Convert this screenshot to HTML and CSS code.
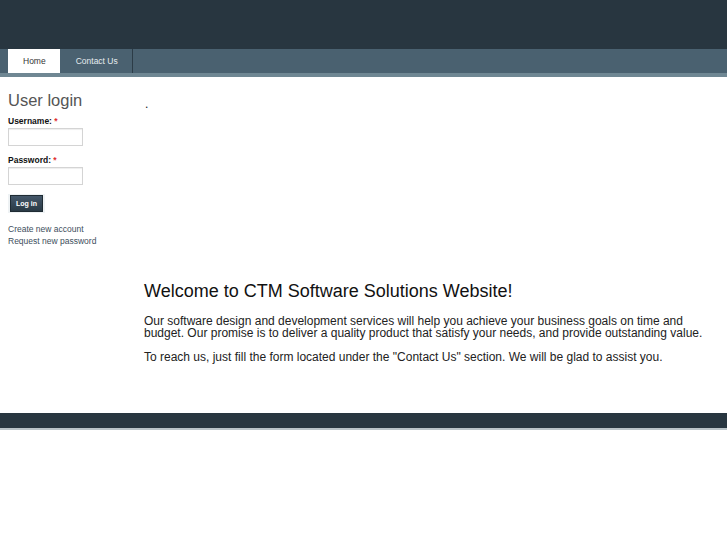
FILE: index.html
```html
<!DOCTYPE html>
<html lang="en">
<head>
  <meta charset="UTF-8">
  <title>CTM Software Solutions</title>
  <link rel="stylesheet" href="styles.css">
</head>
<body>

  <div id="header"></div>

  <div id="nav">
    <ul class="tabs">
      <li class="active"><a href="#">Home</a></li>
      <li><a href="#">Contact Us</a></li>
    </ul>
  </div>

  <div id="page">
    <div id="sidebar">
      <h2>User login</h2>
      <form class="login-form">
        <label for="name">Username: <span class="req">*</span></label>
        <input type="text" id="name">
        <label for="pass">Password: <span class="req">*</span></label>
        <input type="password" id="pass">
        <div class="button-wrap"><button type="button">Log in</button></div>
      </form>
      <ul class="links">
        <li><a href="#">Create new account</a></li>
        <li><a href="#">Request new password</a></li>
      </ul>
    </div>

    <div id="content">
      <div class="dot">.</div>
      <h1>Welcome to CTM Software Solutions Website!</h1>
      <p>Our software design and development services will help you achieve your business goals on time and budget. Our promise is to deliver a quality product that satisfy your needs, and provide outstanding value.</p>
      <p>To reach us, just fill the form located under the "Contact Us" section. We will be glad to assist you.</p>
    </div>
  </div>

  <div id="footer"></div>

</body>
</html>
```

FILE: styles.css
```css
body {
  margin: 0;
  font-family: "Liberation Sans", Arial, sans-serif;
  color: #222;
  background: #fff;
}
#header {
  height: 49px;
  background: #283640;
}
#nav {
  height: 24px;
  background: #4a6170;
  border-bottom: 4px solid #6f8793;
  padding-left: 8px;
}
.tabs {
  list-style: none;
  margin: 0;
  padding: 0;
  display: flex;
  height: 24px;
}
.tabs li {
  border-right: 1px solid #2c3c47;
}
.tabs .active {
  border-right: 1px solid #4a6170;
}
.tabs a {
  display: block;
  height: 24px;
  line-height: 24px;
  padding: 0 14px 0 15px;
  font-size: 8.5px;
  color: #e6ecef;
  text-decoration: none;
}
.tabs .active a {
  background: #fff;
  color: #333;
}
#page {
  display: grid;
  grid-template-columns: 136px 1fr;
  padding: 0 8px;
  min-height: 336px;
}
#sidebar h2 {
  margin: 14px 0 6px;
  font-size: 16.5px;
  font-weight: normal;
  color: #555;
}
.login-form label {
  display: block;
  font-size: 8.5px;
  font-weight: bold;
  color: #111;
  margin-bottom: 2px;
}
.req {
  color: #e03030;
}
.login-form input {
  display: block;
  box-sizing: border-box;
  width: 75px;
  height: 18px;
  margin: 0 0 9px;
  border: 1px solid #d4d4d4;
  box-shadow: inset 0 1px 1px #eee;
}
.button-wrap {
  display: table;
  padding: 1px 2px;
  margin: 0 0 10px;
  background: #eef2f4;
}
.button-wrap button {
  display: block;
  height: 17px;
  padding: 0 5px;
  border: 1px solid #1f2b33;
  background: linear-gradient(#44576a, #2a3a45);
  color: #fff;
  font-family: "Liberation Sans", Arial, sans-serif;
  font-size: 7px;
  font-weight: bold;
}
.links {
  list-style: none;
  margin: 0;
  padding: 0;
  font-size: 8.5px;
  line-height: 12px;
}
.links a {
  color: #3d4e5c;
  text-decoration: none;
}
#content .dot {
  margin-top: 20px;
  padding-left: 1px;
  font-size: 12px;
  height: 184px;
}
#content h1 {
  margin: 0 0 13px;
  font-size: 18px;
  font-weight: normal;
  color: #111;
}
#content p {
  margin: 0 0 12px;
  font-size: 12px;
  line-height: 12px;
  color: #222;
}
#footer {
  height: 15px;
  background: #283640;
  border-bottom: 2px solid #b9c3c8;
}
```
